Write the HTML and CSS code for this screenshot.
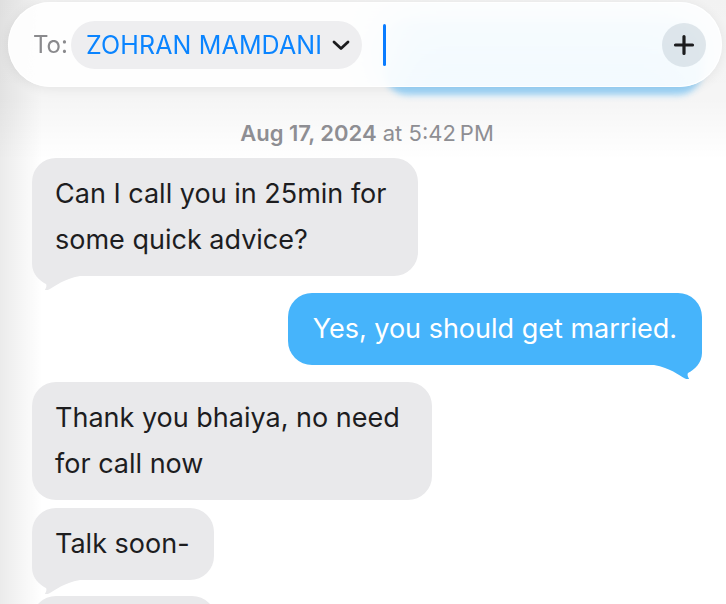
FILE: index.html
```html
<!DOCTYPE html>
<html>
<head>
    <title>New Message</title>
    <link rel="stylesheet" href="styles.css">
</head>
<body>
    <div class="window">
        <main class="thread">
            <div class="row outgoing behind">
                <div class="bubble blue ghost"></div>
            </div>

            <div class="stamp"><b>Aug 17, 2024</b> at 5:42&#8239;PM</div>

            <div class="row incoming">
                <div class="bubble gray tailed narrow">
                    Can I call you in 25min for some quick advice?
                    <svg class="tail left" viewBox="0 0 48 40" width="48" height="40"><path d="M0 0 L0 14 C0 24 8 31 14 34 C15 36 14 38 13 39.5 C13 40.5 15 40.5 17 39.5 C24 36 31 29 48 26 L48 0 Z"/></svg>
                </div>
            </div>

            <div class="row outgoing">
                <div class="bubble blue tailed">
                    Yes, you should get married.
                    <svg class="tail right" viewBox="0 0 48 40" width="48" height="40"><path d="M0 0 L0 14 C0 24 8 31 14 34 C15 36 14 38 13 39.5 C13 40.5 15 40.5 17 39.5 C24 36 31 29 48 26 L48 0 Z"/></svg>
                </div>
            </div>

            <div class="row incoming">
                <div class="bubble gray">Thank you bhaiya, no need for call now</div>
            </div>
            <div class="row incoming close">
                <div class="bubble gray tailed">
                    Talk soon-
                    <svg class="tail left" viewBox="0 0 48 40" width="48" height="40"><path d="M0 0 L0 14 C0 24 8 31 14 34 C15 36 14 38 13 39.5 C13 40.5 15 40.5 17 39.5 C24 36 31 29 48 26 L48 0 Z"/></svg>
                </div>
            </div>
            <div class="row incoming next">
                <div class="bubble gray empty"></div>
            </div>
        </main>

        <header class="compose-bar">
            <span class="to-label">To:</span>
            <div class="recipient">
                <span class="recipient-name">ZOHRAN MAMDANI</span>
                <svg class="chevron" viewBox="0 0 20 12" width="20" height="12"><path d="M3 3 L10 9.5 L17 3" fill="none" stroke="#1c1c1e" stroke-width="2.8" stroke-linecap="round" stroke-linejoin="round"/></svg>
            </div>
            <span class="cursor"></span>
            <button class="add-button" aria-label="Add">
                <svg viewBox="0 0 22 22" width="22" height="22"><path d="M11 2.5 V19.5 M2.5 11 H19.5" stroke="#1c1c1e" stroke-width="3.2" stroke-linecap="round"/></svg>
            </button>
        </header>
    </div>
</body>
</html>
```

FILE: styles.css
```css
* {
    box-sizing: border-box;
}

body {
    margin: 0;
    padding: 0;
    font-family: Inter, 'Helvetica Neue', 'Liberation Sans', sans-serif;
    background: #ffffff;
}

.window {
    position: relative;
    width: 726px;
    height: 604px;
    overflow: hidden;
    background:
        linear-gradient(to right, rgba(0, 0, 0, 0.08), rgba(0, 0, 0, 0) 42px),
        linear-gradient(to bottom, rgba(0, 0, 0, 0.05), rgba(0, 0, 0, 0.04) 100px, rgba(0, 0, 0, 0) 160px),
        #ffffff;
}

/* compose bar floats over the thread */
.compose-bar {
    position: absolute;
    top: 2px;
    left: 8px;
    right: 4px;
    height: 85px;
    display: flex;
    align-items: center;
    padding: 0 16px 0 25px;
    border-radius: 43px;
    background: rgba(255, 255, 255, 0.88);
    backdrop-filter: blur(26px);
    box-shadow: 0 2px 12px rgba(0, 0, 0, 0.07), inset 0 0 0 1px rgba(255, 255, 255, 0.9);
}

.to-label {
    color: #8a8a8d;
    font-size: 24px;
    margin-right: 3px;
}

.recipient {
    display: flex;
    align-items: center;
    height: 48px;
    padding: 0 11px 0 15px;
    border-radius: 24px;
    background: #eeeef0;
}

.recipient-name {
    color: #0a84ff;
    font-size: 25px;
    letter-spacing: 0.15px;
}

.chevron {
    margin-left: 9px;
}

.cursor {
    width: 3px;
    height: 42px;
    margin-left: 21px;
    border-radius: 2px;
    background: #0a7cff;
}

.add-button {
    margin-left: auto;
    width: 44px;
    height: 44px;
    border: none;
    border-radius: 50%;
    padding: 0;
    display: flex;
    align-items: center;
    justify-content: center;
    background: rgba(195, 208, 215, 0.5);
}

/* thread */
.thread {
    display: flex;
    flex-direction: column;
    padding: 22px 24px 0 32px;
}

.row {
    display: flex;
    margin-top: 17px;
}

.row.close {
    margin-top: 8px;
}

.row.next {
    margin-top: 16px;
}

.row.incoming {
    justify-content: flex-start;
}

.row.outgoing {
    justify-content: flex-end;
}

.row.behind {
    margin-top: 0;
    padding-left: 352px;
}

.bubble {
    position: relative;
    max-width: 400px;
    padding: 13px 24px 13px 23px;
    border-radius: 24px;
    font-size: 27px;
    line-height: 46px;
}

.bubble.narrow {
    max-width: 386px;
}

.bubble.gray {
    background: #e9e9eb;
    color: #1d1d1f;
}

.bubble.gray .tail {
    fill: #e9e9eb;
}

.bubble.blue {
    max-width: 440px;
    background: #46b4fb;
    color: #ffffff;
    padding: 13px 25px;
}

.bubble.blue .tail {
    fill: #46b4fb;
}

.bubble.ghost {
    width: 100%;
    max-width: none;
    height: 73px;
    opacity: 0.5;
    filter: blur(3px);
}

.bubble.empty {
    width: 184px;
    height: 73px;
}

.tail {
    position: absolute;
    bottom: -14px;
    z-index: -1;
}

.bubble.tailed {
    z-index: 0;
}

.tail.left {
    left: 0;
}

.tail.right {
    right: 0;
    transform: scaleX(-1);
}

.stamp {
    margin-top: 26px;
    text-align: center;
    color: #8e8e93;
    font-size: 22px;
    line-height: 24px;
}

.stamp b {
    font-weight: 600;
}

.stamp + .row {
    margin-top: 13px;
}
```
